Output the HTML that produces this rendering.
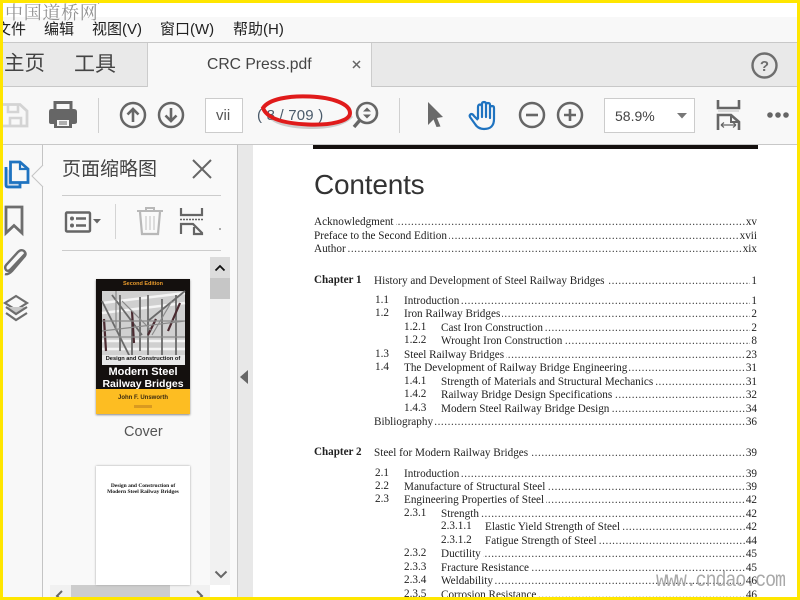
<!DOCTYPE html>
<html><head><meta charset="utf-8"><style>
html,body{margin:0;padding:0;background:#fff}
#p{position:relative;width:800px;height:600px;overflow:hidden;background:#fff;font-family:"Liberation Sans","Noto Sans CJK SC",sans-serif}
.a{position:absolute}
.t{position:absolute;white-space:nowrap;line-height:1}
.l{position:absolute;z-index:0;height:13px;right:43px;font:11.2px/13px "Liberation Serif",serif;color:#222;white-space:nowrap;overflow:hidden}
.l .d{position:absolute;left:0;right:0;top:0;letter-spacing:.55px;overflow:hidden;color:#333}
.l .x{position:relative;background:#fff;padding-right:2px;z-index:1}
.l .r{position:absolute;right:0;top:0;background:#fff;padding-left:1px;z-index:1}
.s{position:absolute;white-space:nowrap;font:11.2px/1 "Liberation Serif",serif;color:#222}
.c{position:absolute;white-space:nowrap;font:bold 11.1px/1 "Liberation Serif",serif;color:#222}
svg{position:absolute;overflow:visible}
</style></head><body><div id="p">
<div class="a" style="left:0;top:17px;width:800px;height:25px;background:#f8f8f8"></div>
<div class="a" style="left:0;top:42px;width:800px;height:1px;background:#c8c8c8"></div>
<div class="a" style="left:0;top:43px;width:800px;height:43px;background:#e9e9e9"></div>
<div class="a" style="left:147px;top:43px;width:225px;height:44px;background:#f8f8f8;border-left:1px solid #ccc;border-right:1px solid #ccc;box-sizing:border-box"></div>
<div class="a" style="left:0;top:86px;width:147px;height:1px;background:#c8c8c8"></div>
<div class="a" style="left:372px;top:86px;width:428px;height:1px;background:#c8c8c8"></div>
<div class="a" style="left:0;top:87px;width:800px;height:57px;background:#f8f8f8"></div>
<div class="a" style="left:0;top:144px;width:800px;height:1px;background:#c8c8c8"></div>
<div class="a" style="left:0;top:145px;width:42px;height:455px;background:#f8f8f8"></div>
<div class="a" style="left:42px;top:145px;width:1px;height:455px;background:#c4c4c4"></div>
<div class="a" style="left:43px;top:145px;width:194px;height:455px;background:#f9f9f9"></div>
<div class="a" style="left:237px;top:145px;width:1px;height:455px;background:#c4c4c4"></div>
<div class="a" style="left:238px;top:145px;width:15px;height:455px;background:#e8e8e8"></div>
<div class="a" style="left:253px;top:145px;width:547px;height:455px;background:#fff"></div>

<div class="t" style="left:5px;top:3px;font-size:18px;letter-spacing:.7px;color:#929292;font-family:'Noto Serif CJK SC','Liberation Serif',serif">中国道桥网</div>
<div class="t" style="left:98px;top:2px;font-size:8px;color:#333">'</div>

<div class="t" style="left:-4px;top:22px;font-size:15px;color:#222">文件</div>
<div class="t" style="left:44px;top:22px;font-size:15px;color:#222">编辑</div>
<div class="t" style="left:92px;top:22px;font-size:15px;color:#222">视图(V)</div>
<div class="t" style="left:160px;top:22px;font-size:15px;color:#222">窗口(W)</div>
<div class="t" style="left:233px;top:22px;font-size:15px;color:#222">帮助(H)</div>

<div class="t" style="left:4px;top:54px;font-size:20.5px;color:#444">主页</div>
<div class="t" style="left:74px;top:54px;font-size:21px;color:#444">工具</div>
<div class="t" style="left:207px;top:57px;font-size:15.7px;color:#444">CRC Press.pdf</div>
<svg style="left:352px;top:60px" width="10" height="10"><path d="M1 1L8 8M8 1L1 8" stroke="#666" stroke-width="1.5"/></svg>
<svg style="left:751px;top:52px" width="28" height="28"><circle cx="13.5" cy="13.5" r="12" fill="none" stroke="#6e6e6e" stroke-width="2.4"/><text x="13.5" y="19" text-anchor="middle" font-family="Liberation Sans" font-weight="bold" font-size="15" fill="#6e6e6e">?</text></svg>

<svg style="left:0;top:100px" width="30" height="30"><path d="M3 4.500H20L27 11V26H3" fill="none" stroke="#d4d4d4" stroke-width="2.800"/><path d="M8 4V12H18V4M10 26V18H21V26" fill="none" stroke="#d4d4d4" stroke-width="2.600"/></svg>
<svg style="left:48px;top:100px" width="30" height="30"><path d="M7 10V2.500H23V10" fill="none" stroke="#666" stroke-width="3"/><path d="M3 9H26Q29 9 29 12V22Q29 24 26 24H24V17H6V24H3Q1 24 1 22V12Q1 9 3 9Z" fill="#666"/><path d="M6 17H24V28H6Z" fill="#666"/><path d="M9 20H21V26H9Z" fill="#f8f8f8"/><path d="M11 22H19M11 24H19" stroke="#666" stroke-width="1"/></svg>
<div class="a" style="left:98px;top:98px;width:1px;height:35px;background:#d0d0d0"></div>
<svg style="left:120px;top:101px" width="28" height="28"><circle cx="13" cy="14" r="12" fill="none" stroke="#666" stroke-width="2.500"/><path d="M13 21V8M7.500 13.500L13 8L18.500 13.500" fill="none" stroke="#666" stroke-width="2.600"/></svg>
<svg style="left:158px;top:101px" width="28" height="28"><circle cx="13" cy="14" r="12" fill="none" stroke="#666" stroke-width="2.500"/><path d="M13 7V20M7.500 14.500L13 20L18.500 14.500" fill="none" stroke="#666" stroke-width="2.600"/></svg>
<div class="a" style="left:205px;top:98px;width:38px;height:35px;box-sizing:border-box;border:1px solid #ccc;background:#fff"></div>
<div class="t" style="left:216px;top:108px;font-size:15px;color:#555">vii</div>
<div class="t" style="left:257px;top:108px;font-size:15px;color:#4a5a6a;letter-spacing:.2px">( 8 / 709 )</div>
<svg style="left:255px;top:92px" width="100" height="40">
<path d="M12 22C18 31 34 35 54 35.500C74 36 90 32 97 24" fill="none" stroke="#999" stroke-width="3" opacity=".45"/>
<path d="M8 16C14 7 34 3.500 55 4.500C78 5.500 95 12 95 21C95 29 76 33.500 53 32.500C30 31.500 12 27 8 16Z" fill="none" stroke="#e01b1b" stroke-width="4"/></svg>
<svg style="left:352px;top:102px" width="28" height="28"><circle cx="15" cy="11" r="10" fill="none" stroke="#666" stroke-width="2.600"/><path d="M8 18L2 25" stroke="#666" stroke-width="3.400"/><path d="M15 5.500L19 9.500H11ZM15 16.500L19 12.500H11Z" fill="#666"/></svg>
<div class="a" style="left:399px;top:98px;width:1px;height:35px;background:#d0d0d0"></div>

<svg style="left:424px;top:100px" width="22" height="30"><path d="M4 2L19 17L13 18L16.500 26.500L12.500 27L9.500 19.500L4 25Z" fill="#6a6a6a"/></svg>
<svg style="left:467px;top:100px" width="30" height="31"><path d="M11 19V7Q11 4.500 13 4.500Q15 4.500 15 7V17V4Q15 2 17 2Q19 2 19 4V17V5Q19 3 21 3Q23 3 23 5V18V8Q23 6 25 6Q27 6 27 8V19Q27 29 17 29Q11 29 8 24L3 17Q2 15 4 14Q6 14 7 16L11 20" fill="none" stroke="#1f73c0" stroke-width="2.200" stroke-linejoin="round"/></svg>
<svg style="left:518px;top:101px" width="28" height="28"><circle cx="14" cy="14" r="12" fill="none" stroke="#666" stroke-width="2.500"/><path d="M8 14H20" stroke="#666" stroke-width="2.600"/></svg>
<svg style="left:556px;top:101px" width="28" height="28"><circle cx="14" cy="14" r="12" fill="none" stroke="#666" stroke-width="2.500"/><path d="M8 14H20M14 8V20" stroke="#666" stroke-width="2.600"/></svg>
<div class="a" style="left:604px;top:98px;width:91px;height:35px;box-sizing:border-box;border:1px solid #ccc;background:#fff"></div>
<div class="t" style="left:615px;top:109px;font-size:14px;color:#444">58.9%</div>
<svg style="left:676px;top:112px" width="12" height="8"><path d="M1 1H11L6 6.500Z" fill="#777"/></svg>
<svg style="left:716px;top:99px" width="26" height="32"><path d="M2 1V9H23V1M2 31V16H15L23 23V31" fill="none" stroke="#666" stroke-width="2.600"/><path d="M15 16V23H23" fill="none" stroke="#666" stroke-width="2"/><path d="M2 12H23" stroke="#ddd" stroke-width="2"/><path d="M5 26H20M5 26L8 23.500M5 26L8 28.500M20 26L17 23.500M20 26L17 28.500" fill="none" stroke="#666" stroke-width="1.200"/></svg>
<svg style="left:766px;top:110px" width="26" height="10"><circle cx="4" cy="5" r="2.800" fill="#666"/><circle cx="12" cy="5" r="2.800" fill="#666"/><circle cx="20" cy="5" r="2.800" fill="#666"/></svg>

<svg style="left:3px;top:158px" width="26" height="32"><path d="M3 9V27Q3 29 5 29H17V25" fill="#c8d8ea" stroke="#1f73c0" stroke-width="2.800"/><path d="M7.500 4H17L25 11V24.500H7.500Z" fill="#f8f8f8" stroke="#1f73c0" stroke-width="2.800"/><path d="M17 4V11H25" fill="none" stroke="#1f73c0" stroke-width="2.200"/></svg>
<svg style="left:31px;top:165px" width="13" height="22"><path d="M12 0L1 11L12 22" fill="#f9f9f9" stroke="#c4c4c4"/></svg>
<svg style="left:3px;top:205px" width="22" height="30"><path d="M3 2H19V28L11 20.500L3 28Z" fill="none" stroke="#6e6e6e" stroke-width="2.800"/></svg>
<svg style="left:3px;top:248px" width="24" height="28"><path d="M22 6L8 21Q5 24 3 22Q1 19 4 16L15 4Q18 1 21 3Q24 6 21 9L9 23Q5 27 2 26" fill="none" stroke="#6e6e6e" stroke-width="2.400"/></svg>
<svg style="left:3px;top:294px" width="26" height="30"><path d="M13 2L24 9L13 16L2 9Z" fill="none" stroke="#6e6e6e" stroke-width="2.200"/><path d="M3 13L13 20L24 13" fill="#c8c8c8" stroke="#6e6e6e" stroke-width="2.200"/><path d="M3 19L13 26L24 19" fill="none" stroke="#6e6e6e" stroke-width="2.200"/></svg>

<div class="t" style="left:62px;top:160px;font-size:19px;color:#444">页面缩略图</div>
<svg style="left:191px;top:158px" width="22" height="22"><path d="M2 2L20 20M20 2L2 20" stroke="#666" stroke-width="2"/></svg>
<div class="a" style="left:62px;top:195px;width:159px;height:1px;background:#ccc"></div>
<div class="a" style="left:62px;top:250px;width:159px;height:1px;background:#ccc"></div>
<svg style="left:65px;top:211px" width="38" height="22"><rect x="1" y="1.500" width="24" height="19" rx="1" fill="none" stroke="#666" stroke-width="2.400"/><circle cx="7" cy="7.500" r="2" fill="#666"/><circle cx="7" cy="14.500" r="2" fill="#666"/><path d="M11 7.500H21M11 14.500H21" stroke="#666" stroke-width="2.400"/><path d="M28 8H36L32 12.500Z" fill="#666"/></svg>
<div class="a" style="left:115px;top:204px;width:1px;height:35px;background:#d4d4d4"></div>
<svg style="left:136px;top:206px" width="28" height="30"><path d="M1 5H27M10 5V2H18V5" fill="none" stroke="#b8b8b8" stroke-width="2"/><path d="M4 6L6 28H22L24 6" fill="none" stroke="#b8b8b8" stroke-width="2.200"/><path d="M10 10V24M14 10V24M18 10V24" stroke="#c8c8c8" stroke-width="1.200"/></svg>
<svg style="left:179px;top:207px" width="24" height="28"><path d="M2 1V8H23V1" fill="none" stroke="#666" stroke-width="2.200"/><path d="M1 12.500H24" stroke="#666" stroke-width="1.600" stroke-dasharray="2 1"/><path d="M2 27V17H14L23 26V27H15V20" fill="none" stroke="#666" stroke-width="2.200"/></svg>
<div class="a" style="left:219px;top:228px;width:2px;height:2px;background:#aaa"></div>

<div class="a" style="left:210px;top:257px;width:20px;height:328px;background:#f1f1f1"></div>
<div class="a" style="left:210px;top:257px;width:20px;height:21px;background:#dcdcdc"></div>
<svg style="left:214px;top:264px" width="12" height="8"><path d="M1.500 6.500L6 2L10.500 6.500" fill="none" stroke="#111" stroke-width="1.800"/></svg>
<div class="a" style="left:210px;top:278px;width:20px;height:21px;background:#c6c6c6"></div>
<svg style="left:214px;top:570px" width="14" height="9"><path d="M1.500 1.500L7 7L12.500 1.500" fill="none" stroke="#666" stroke-width="2"/></svg>
<div class="a" style="left:50px;top:585px;width:160px;height:12px;background:#f1f1f1"></div>
<div class="a" style="left:71px;top:585px;width:99px;height:12px;background:#cdcdcd"></div>
<div class="a" style="left:210px;top:585px;width:20px;height:12px;background:#fff"></div>
<svg style="left:55px;top:590px" width="9" height="10"><path d="M7 1L2 6L7 11" fill="none" stroke="#666" stroke-width="2"/></svg>
<svg style="left:195px;top:590px" width="9" height="10"><path d="M2 1L7 6L2 11" fill="none" stroke="#666" stroke-width="2"/></svg>

<div class="a" style="left:96px;top:279px;width:94px;height:135px;background:#14100e;box-shadow:0 1px 2px #888;overflow:hidden">
<div class="t" style="left:0;width:94px;text-align:center;top:3px;font-size:5.500px;font-weight:bold;color:#e89a2c">Second Edition</div>
<svg style="left:6px;top:12px" width="83" height="74"><rect width="83" height="74" fill="#d0d0d0"/><path d="M0 12L83 2M0 22L83 12M0 50H83M0 58H83M0 66H83" stroke="#f4f4f4" stroke-width="2.500"/><path d="M0 10L30 70M10 4L40 44M83 0L46 30M46 4L46 70M30 30V70M60 8V70M74 4V70M18 4V60M38 6V60" stroke="#6a6a6a" stroke-width="1.800"/><path d="M2 28L4 60M32 52L30 20M66 40L78 12M46 44L54 28" stroke="#4a2a30" stroke-width="2.200"/><path d="M0 30H83M0 40L83 30M14 0V40M20 10L50 40M70 10L50 44M0 46H83" stroke="#8a8a8a" stroke-width="1.200"/></svg>
<div class="a" style="left:6px;top:76px;width:83px;height:10px;background:#e8e8e8"></div>
<div class="t" style="left:0;width:94px;text-align:center;top:78px;font-size:5.700px;font-weight:bold;color:#111">Design and Construction of</div>
<div class="t" style="left:0;width:94px;text-align:center;top:87.500px;font-size:11px;font-weight:bold;color:#fff">Modern Steel</div>
<div class="t" style="left:0;width:94px;text-align:center;top:100px;font-size:10.500px;font-weight:bold;color:#fff">Railway Bridges</div>
<div class="a" style="left:0;top:110px;width:94px;height:25px;background:#fdbd22"></div>
<div class="t" style="left:0;width:94px;text-align:center;top:116px;font-size:6px;font-weight:bold;color:#3a2a10">John F. Unsworth</div>
<div class="a" style="left:38px;top:126px;width:18px;height:3px;background:#d99a20"></div>
</div>
<div class="t" style="left:124px;top:425px;font-size:14.500px;color:#555">Cover</div>

<div class="a" style="left:96px;top:466px;width:94px;height:119px;background:#fff;box-shadow:0 0 2px #999"></div>
<div class="t" style="left:96px;width:94px;text-align:center;top:483px;font:bold 5.500px/6px 'Liberation Serif',serif;color:#111">Design and Construction of<br>Modern Steel Railway Bridges</div>

<svg style="left:240px;top:370px" width="9" height="14"><path d="M8 0V14L0 7Z" fill="#666"/></svg>

<div class="a" style="left:313px;top:145px;width:445px;height:4px;background:#14100e"></div>
<div class="t" style="left:314px;top:171px;font:28px/1 'Liberation Sans',sans-serif;letter-spacing:-.2px;color:#333">Contents</div>

<div class="a" style="left:0;top:1px;width:800px;height:600px">
<div class="l" style="left:314px;top:215px"><span class="d">............................................................................................................................................................................................................................</span><span class="x">Acknowledgment</span><span class="r">xv</span></div>
<div class="l" style="left:314px;top:229px"><span class="d">............................................................................................................................................................................................................................</span><span class="x">Preface to the Second Edition</span><span class="r">xvii</span></div>
<div class="l" style="left:314px;top:242px"><span class="d">............................................................................................................................................................................................................................</span><span class="x">Author</span><span class="r">xix</span></div>

<div class="c" style="left:314px;top:274px">Chapter 1</div>
<div class="l" style="left:374px;top:274px"><span class="d">............................................................................................................................................................................................</span><span class="x">History and Development of Steel Railway Bridges</span><span class="r">1</span></div>

<div class="s" style="left:375px;top:294px">1.1</div>
<div class="l" style="left:404px;top:294px"><span class="d">............................................................................................................................................................................................</span><span class="x">Introduction</span><span class="r">1</span></div>
<div class="s" style="left:375px;top:307px">1.2</div>
<div class="l" style="left:404px;top:307px"><span class="d">............................................................................................................................................................................................</span><span class="x">Iron Railway Bridges</span><span class="r">2</span></div>
<div class="s" style="left:404px;top:321px">1.2.1</div>
<div class="l" style="left:441px;top:321px"><span class="d">............................................................................................................................................................................................</span><span class="x">Cast Iron Construction</span><span class="r">2</span></div>
<div class="s" style="left:404px;top:334px">1.2.2</div>
<div class="l" style="left:441px;top:334px"><span class="d">............................................................................................................................................................................................</span><span class="x">Wrought Iron Construction</span><span class="r">8</span></div>
<div class="s" style="left:375px;top:348px">1.3</div>
<div class="l" style="left:404px;top:348px"><span class="d">............................................................................................................................................................................................</span><span class="x">Steel Railway Bridges</span><span class="r">23</span></div>
<div class="s" style="left:375px;top:361px">1.4</div>
<div class="l" style="left:404px;top:361px"><span class="d">............................................................................................................................................................................................</span><span class="x">The Development of Railway Bridge Engineering</span><span class="r">31</span></div>
<div class="s" style="left:404px;top:375px">1.4.1</div>
<div class="l" style="left:441px;top:375px"><span class="d">............................................................................................................................................................................................</span><span class="x">Strength of Materials and Structural Mechanics</span><span class="r">31</span></div>
<div class="s" style="left:404px;top:388px">1.4.2</div>
<div class="l" style="left:441px;top:388px"><span class="d">............................................................................................................................................................................................</span><span class="x">Railway Bridge Design Specifications</span><span class="r">32</span></div>
<div class="s" style="left:404px;top:402px">1.4.3</div>
<div class="l" style="left:441px;top:402px"><span class="d">............................................................................................................................................................................................</span><span class="x">Modern Steel Railway Bridge Design</span><span class="r">34</span></div>
<div class="l" style="left:374px;top:415px"><span class="d">............................................................................................................................................................................................</span><span class="x">Bibliography</span><span class="r">36</span></div>

<div class="c" style="left:314px;top:446px">Chapter 2</div>
<div class="l" style="left:374px;top:446px"><span class="d">............................................................................................................................................................................................</span><span class="x">Steel for Modern Railway Bridges</span><span class="r">39</span></div>

<div class="s" style="left:375px;top:467px">2.1</div>
<div class="l" style="left:404px;top:467px"><span class="d">............................................................................................................................................................................................</span><span class="x">Introduction</span><span class="r">39</span></div>
<div class="s" style="left:375px;top:480px">2.2</div>
<div class="l" style="left:404px;top:480px"><span class="d">............................................................................................................................................................................................</span><span class="x">Manufacture of Structural Steel</span><span class="r">39</span></div>
<div class="s" style="left:375px;top:493px">2.3</div>
<div class="l" style="left:404px;top:493px"><span class="d">............................................................................................................................................................................................</span><span class="x">Engineering Properties of Steel</span><span class="r">42</span></div>
<div class="s" style="left:404px;top:507px">2.3.1</div>
<div class="l" style="left:441px;top:507px"><span class="d">............................................................................................................................................................................................</span><span class="x">Strength</span><span class="r">42</span></div>
<div class="s" style="left:441px;top:520px">2.3.1.1</div>
<div class="l" style="left:485px;top:520px"><span class="d">............................................................................................................................................................................................</span><span class="x">Elastic Yield Strength of Steel</span><span class="r">42</span></div>
<div class="s" style="left:441px;top:534px">2.3.1.2</div>
<div class="l" style="left:485px;top:534px"><span class="d">............................................................................................................................................................................................</span><span class="x">Fatigue Strength of Steel</span><span class="r">44</span></div>
<div class="s" style="left:404px;top:547px">2.3.2</div>
<div class="l" style="left:441px;top:547px"><span class="d">............................................................................................................................................................................................</span><span class="x">Ductility</span><span class="r">45</span></div>
<div class="s" style="left:404px;top:561px">2.3.3</div>
<div class="l" style="left:441px;top:561px"><span class="d">............................................................................................................................................................................................</span><span class="x">Fracture Resistance</span><span class="r">45</span></div>
<div class="s" style="left:404px;top:574px">2.3.4</div>
<div class="l" style="left:441px;top:574px"><span class="d">............................................................................................................................................................................................</span><span class="x">Weldability</span><span class="r">46</span></div>
<div class="s" style="left:404px;top:588px">2.3.5</div>
<div class="l" style="left:441px;top:588px"><span class="d">............................................................................................................................................................................................</span><span class="x">Corrosion Resistance</span><span class="r">46</span></div>
</div>

<div class="t" style="left:656px;top:571px;z-index:2;font:21px/1 'Liberation Mono',monospace;letter-spacing:-1.200px;color:#a0a0a0;transform:scaleX(.87);transform-origin:0 0;opacity:.9">www.cndao.com</div>

<div class="a" style="left:0;top:0;width:800px;height:3px;background:#ffe600;z-index:3"></div>
<div class="a" style="left:0;top:597px;width:800px;height:3px;background:#ffe600;z-index:3"></div>
<div class="a" style="left:0;top:0;width:3px;height:600px;background:#ffe600;z-index:3"></div>
<div class="a" style="left:797px;top:0;width:3px;height:600px;background:#ffe600;z-index:3"></div>
</div></body></html>
